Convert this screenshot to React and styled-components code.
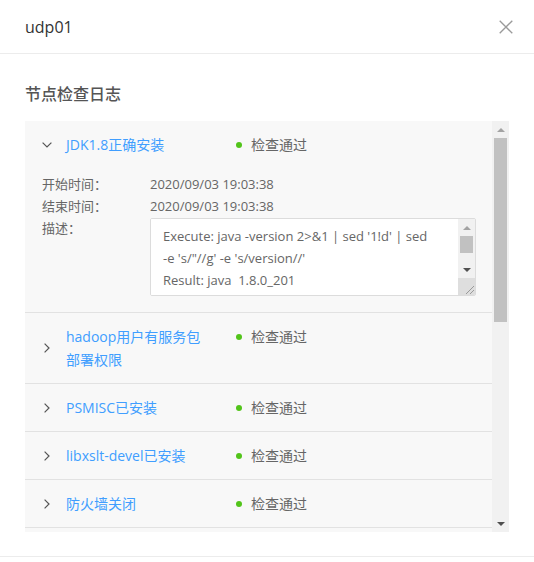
import React from 'react';
import styled, { createGlobalStyle } from 'styled-components';

const Global = createGlobalStyle`
  html, body { margin: 0; padding: 0; background: #fff; }
  body { font-family: "Open Sans", "Noto Sans CJK SC", sans-serif; }
  * { box-sizing: border-box; }
`;

const Modal = styled.div`
  width: 534px;
  height: 562px;
  display: flex;
  flex-direction: column;
  background: #fff;
  overflow: hidden;
`;

const Header = styled.div`
  height: 54px;
  flex: none;
  display: flex;
  align-items: center;
  justify-content: space-between;
  padding: 0 21px 0 25px;
  border-bottom: 1px solid #ececec;
`;

const Title = styled.div`
  font-size: 16px;
  font-weight: 500;
  color: #333;
  line-height: 24px;
`;

const CloseButton = styled.button`
  border: 0;
  background: none;
  padding: 0;
  width: 14px;
  height: 14px;
  display: flex;
  cursor: pointer;
`;

const Body = styled.div`
  flex: none;
  padding: 28px 25px 24px;
  border-bottom: 1px solid #ececec;
`;

const SectionTitle = styled.h3`
  margin: 0 0 15px;
  font-size: 16px;
  font-weight: 500;
  line-height: 24px;
  color: #555;
`;

const Panel = styled.div`
  height: 411px;
  display: flex;
  background: #f8f8f8;
`;

const PanelContent = styled.div`
  flex: 1;
  min-width: 0;
  overflow-y: auto;
  scrollbar-width: none;
`;

/* decorative scrollbar (the page's native scrollbars are not drawn) */
const ScrollBar = styled.div`
  width: 17px;
  flex: none;
  display: flex;
  flex-direction: column;
  background: #f1f1f1;
`;

const ScrollButton = styled.div`
  height: 17px;
  flex: none;
  display: flex;
  align-items: center;
  justify-content: center;
`;

const Arrow = styled.span`
  width: 0;
  height: 0;
  border-left: 4px solid transparent;
  border-right: 4px solid transparent;
  ${p => (p.$dir === 'up'
    ? `border-bottom: 4px solid ${p.$color};`
    : `border-top: 4px solid ${p.$color};`)}
`;

const ScrollTrack = styled.div`
  flex: 1;
  display: flex;
  flex-direction: column;
`;

const ScrollThumb = styled.div`
  height: ${p => p.$size}px;
  margin: 0 2px;
  background: #c1c1c1;
`;

const Resizer = styled.div`
  height: 17px;
  flex: none;
  background: #dedede;
  display: flex;
  align-items: flex-end;
  justify-content: flex-end;
`;

const Row = styled.div`
  border-bottom: 1px solid #e2e2e2;
`;

const RowHeader = styled.div`
  display: flex;
  align-items: center;
  padding: 12px 0 12px 16px;
  font-size: 14px;
  min-height: 47px;
`;

const Chevron = styled.span`
  width: 12px;
  margin-right: 13px;
  display: flex;
  justify-content: center;
  flex: none;
`;

const ItemName = styled.span`
  width: 145px;
  flex: none;
  color: #409eff;
  line-height: 23px;
`;

const Status = styled.span`
  margin-left: 25px;
  display: flex;
  align-items: center;
  color: #666;
  align-self: flex-start;
  line-height: 23px;
`;

const Dot = styled.span`
  width: 6px;
  height: 6px;
  border-radius: 50%;
  background: ${p => p.$color};
  margin-right: 9px;
`;

const Details = styled.div`
  display: grid;
  grid-template-columns: 108px 326px;
  padding: 5px 16px 16px 17px;
  font-size: 13px;
  line-height: 22px;
  color: #666;
`;

const Label = styled.span``;
const Value = styled.span``;

const LogBox = styled.div`
  margin-top: 1px;
  height: 78px;
  display: flex;
  border: 1px solid #dcdcdc;
  border-radius: 2px;
  background: #fff;
  overflow: hidden;
`;

const LogArea = styled.textarea`
  flex: 1;
  min-width: 0;
  border: 0;
  padding: 6px 11px 6px 12px;
  margin: 0;
  font-family: "Open Sans", "Noto Sans CJK SC", sans-serif;
  font-size: 13px;
  line-height: 22px;
  color: #666;
  background: #fff;
  resize: none;
  outline: none;
  overflow-y: auto;
  scrollbar-width: none;
  white-space: pre-wrap;
`;

const ChevronDown = () => (
  <svg width="10" height="6" viewBox="0 0 10 6">
    <path d="M0.6 0.6 L5 5 L9.4 0.6" fill="none" stroke="#555" strokeWidth="1.2" />
  </svg>
);

const ChevronRight = () => (
  <svg width="6" height="10" viewBox="0 0 6 10">
    <path d="M0.6 0.6 L5 5 L0.6 9.4" fill="none" stroke="#555" strokeWidth="1.2" />
  </svg>
);

const items = [
  'hadoop用户有服务包部署权限',
  'PSMISC已安装',
  'libxslt-devel已安装',
  '防火墙关闭',
];

const log = "Execute: java -version 2>&1 | sed '1!d' | sed\n-e 's/\"//g' -e 's/version//'\nResult: java  1.8.0_201\n";

const StatusTag = () => (
  <Status>
    <Dot $color="#52c41a" />
    检查通过
  </Status>
);

const FakeScrollBar = ({ thumb, resizer }) => (
  <ScrollBar>
    <ScrollButton><Arrow $dir="up" $color="#a3a3a3" /></ScrollButton>
    <ScrollTrack>
      <ScrollThumb $size={thumb} />
    </ScrollTrack>
    <ScrollButton><Arrow $dir="down" $color="#505050" /></ScrollButton>
    {resizer && (
      <Resizer>
        <svg width="11" height="11" viewBox="0 0 11 11">
          <path d="M2 10 L10 2 M6 10 L10 6" stroke="#9a9a9a" strokeWidth="1" />
        </svg>
      </Resizer>
    )}
  </ScrollBar>
);

export default function App() {
  return (
    <>
      <Global />
      <Modal>
        <Header>
          <Title>udp01</Title>
          <CloseButton aria-label="close">
            <svg width="14" height="14" viewBox="0 0 14 14">
              <path d="M0.7 0.7 L13.3 13.3 M13.3 0.7 L0.7 13.3" stroke="#9a9a9a" strokeWidth="1.3" />
            </svg>
          </CloseButton>
        </Header>
        <Body>
          <SectionTitle>节点检查日志</SectionTitle>
          <Panel>
            <PanelContent>
              <Row>
                <RowHeader>
                  <Chevron><ChevronDown /></Chevron>
                  <ItemName>JDK1.8正确安装</ItemName>
                  <StatusTag />
                </RowHeader>
                <Details>
                  <Label>开始时间：</Label>
                  <Value>2020/09/03 19:03:38</Value>
                  <Label>结束时间：</Label>
                  <Value>2020/09/03 19:03:38</Value>
                  <Label>描述：</Label>
                  <LogBox>
                    <LogArea readOnly defaultValue={log} />
                    <FakeScrollBar thumb={17} resizer />
                  </LogBox>
                </Details>
              </Row>
              {items.map(name => (
                <Row key={name}>
                  <RowHeader>
                    <Chevron><ChevronRight /></Chevron>
                    <ItemName>{name}</ItemName>
                    <StatusTag />
                  </RowHeader>
                </Row>
              ))}
            </PanelContent>
            <FakeScrollBar thumb={184} />
          </Panel>
        </Body>
      </Modal>
    </>
  );
}
